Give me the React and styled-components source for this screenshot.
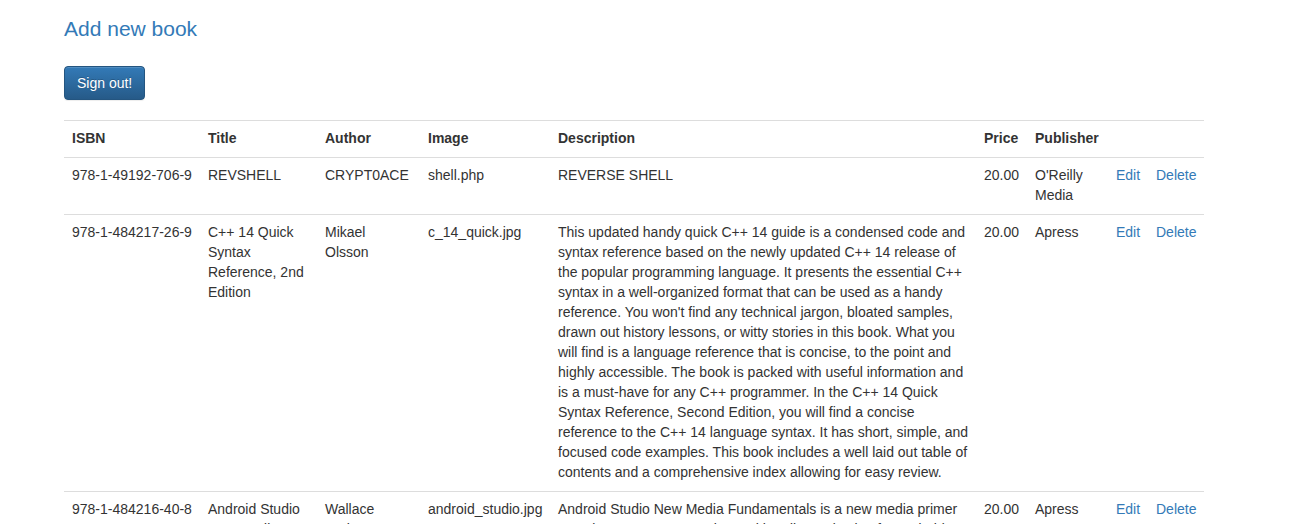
import React from "react";
import styled, { createGlobalStyle } from "styled-components";

const Global = createGlobalStyle`
  html, body { margin: 0; padding: 0; background: #fff; }
  body {
    font-family: "Liberation Sans", Arial, Helvetica, sans-serif;
    font-size: 14px;
    line-height: 1.42857143;
    color: #333;
  }
  * { box-sizing: border-box; }
`;

const Page = styled.div`
  width: 1140px;
  margin-left: 64px;
  padding-top: 17px;
`;

const Heading = styled.a`
  display: block;
  font-size: 21px;
  line-height: 23px;
  color: #337ab7;
  text-decoration: none;
  font-weight: 500;
`;

const PrimaryButton = styled.button`
  display: inline-block;
  margin-top: 26px;
  padding: 6px 12px;
  font-family: inherit;
  font-size: 14px;
  line-height: 20px;
  color: #fff;
  border: 1px solid #245580;
  border-radius: 4px;
  background-color: #265a88;
  background-image: linear-gradient(to bottom, #337ab7 0, #265a88 100%);
  text-shadow: 0 -1px 0 rgba(0, 0, 0, 0.2);
  box-shadow: inset 0 1px 0 rgba(255, 255, 255, 0.15), 0 1px 1px rgba(0, 0, 0, 0.075);
  cursor: pointer;
`;

const Table = styled.table`
  width: 1140px;
  margin-top: 20px;
  border-collapse: collapse;
  border-spacing: 0;
  table-layout: fixed;
`;

const Th = styled.th`
  padding: 7px 8px 9px;
  text-align: left;
  vertical-align: top;
  font-weight: bold;
  line-height: 20px;
  border-top: 1px solid #ddd;
`;

const Td = styled.td`
  padding: 7px 8px 9px;
  vertical-align: top;
  line-height: 20px;
  border-top: 1px solid #ddd;
`;

const Line = styled.span`
  display: block;
  white-space: nowrap;
`;

const Link = styled.a`
  color: #337ab7;
  text-decoration: none;
`;

const widths = [136, 117, 103, 130, 426, 51, 81, 40, 56];

const books = [
  {
    isbn: "978-1-49192-706-9",
    title: ["REVSHELL"],
    author: ["CRYPT0ACE"],
    image: "shell.php",
    desc: ["REVERSE SHELL"],
    price: "20.00",
    publisher: ["O'Reilly", "Media"],
  },
  {
    isbn: "978-1-484217-26-9",
    title: ["C++ 14 Quick", "Syntax", "Reference, 2nd", "Edition"],
    author: ["Mikael", "Olsson"],
    image: "c_14_quick.jpg",
    desc: [
      "This updated handy quick C++ 14 guide is a condensed code and",
      "syntax reference based on the newly updated C++ 14 release of",
      "the popular programming language. It presents the essential C++",
      "syntax in a well-organized format that can be used as a handy",
      "reference. You won't find any technical jargon, bloated samples,",
      "drawn out history lessons, or witty stories in this book. What you",
      "will find is a language reference that is concise, to the point and",
      "highly accessible. The book is packed with useful information and",
      "is a must-have for any C++ programmer. In the C++ 14 Quick",
      "Syntax Reference, Second Edition, you will find a concise",
      "reference to the C++ 14 language syntax. It has short, simple, and",
      "focused code examples. This book includes a well laid out table of",
      "contents and a comprehensive index allowing for easy review.",
    ],
    price: "20.00",
    publisher: ["Apress"],
  },
  {
    isbn: "978-1-484216-40-8",
    title: ["Android Studio", "New Media", "Fundamentals"],
    author: ["Wallace", "Jackson"],
    image: "android_studio.jpg",
    desc: [
      "Android Studio New Media Fundamentals is a new media primer",
      "covering concepts central to multimedia production for Android",
      "including digital imagery, digital audio, digital video, digital",
      "illustration and 3D, using open source software packages such",
      "as GIMP, Audacity, Blender, and Inkscape.",
    ],
    price: "20.00",
    publisher: ["Apress"],
  },
];

const Lines = ({ items }) => items.map((t, i) => <Line key={i}>{t}</Line>);

export default function App() {
  return (
    <>
      <Global />
      <Page>
        <Heading href="#">Add new book</Heading>
        <PrimaryButton type="button">Sign out!</PrimaryButton>
        <Table>
          <colgroup>
            {widths.map((w, i) => (
              <col key={i} style={{ width: w }} />
            ))}
          </colgroup>
          <tbody>
            <tr>
              <Th>ISBN</Th>
              <Th>Title</Th>
              <Th>Author</Th>
              <Th>Image</Th>
              <Th>Description</Th>
              <Th>Price</Th>
              <Th>Publisher</Th>
              <Th></Th>
              <Th></Th>
            </tr>
            {books.map((b) => (
              <tr key={b.isbn}>
                <Td>{b.isbn}</Td>
                <Td><Lines items={b.title} /></Td>
                <Td><Lines items={b.author} /></Td>
                <Td>{b.image}</Td>
                <Td><Lines items={b.desc} /></Td>
                <Td>{b.price}</Td>
                <Td><Lines items={b.publisher} /></Td>
                <Td>
                  <Link href="#">Edit</Link>
                </Td>
                <Td>
                  <Link href="#">Delete</Link>
                </Td>
              </tr>
            ))}
          </tbody>
        </Table>
      </Page>
    </>
  );
}
